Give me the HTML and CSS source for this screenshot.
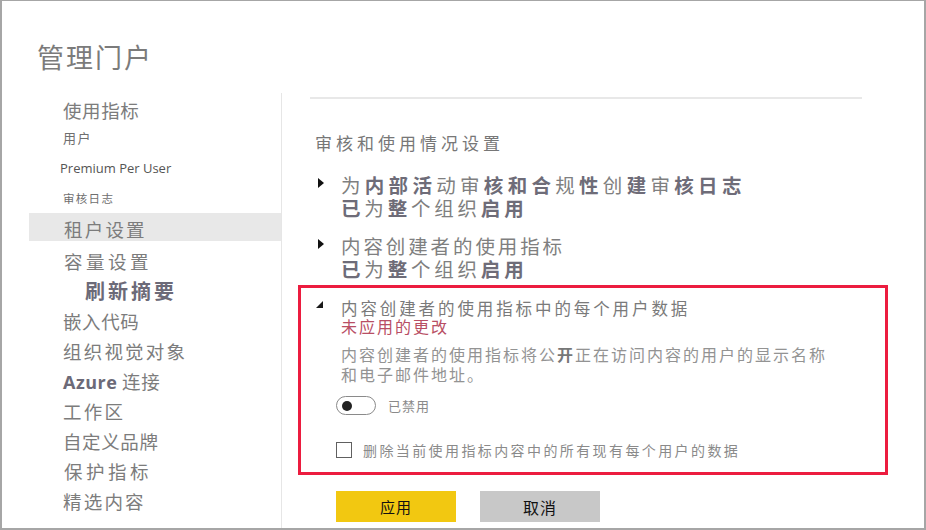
FILE: index.html
```html
<!DOCTYPE html>
<html lang="zh-CN">
<head>
<meta charset="utf-8">
<title>管理门户</title>
<link rel="stylesheet" href="styles.css">
</head>
<body>
<div class="frame">
  <header class="header"><h1 class="title">管理门户</h1></header>
  <div class="main">
    <nav class="nav">
      <div class="nav-item big first">使用指标</div>
      <div class="nav-item small users">用户</div>
      <div class="nav-item latin">Premium Per User</div>
      <div class="nav-item tiny">审核日志</div>
      <div class="nav-item big active">租户设置</div>
      <div class="nav-item big wide gapTop">容量设置</div>
      <div class="nav-item big bold sub">刷新摘要</div>
      <div class="nav-item big">嵌入代码</div>
      <div class="nav-item big mid">组织视觉对象</div>
      <div class="nav-item big"><b class="azure">Azure</b> 连接</div>
      <div class="nav-item big mid">工作区</div>
      <div class="nav-item big">自定义品牌</div>
      <div class="nav-item big wide">保护指标</div>
      <div class="nav-item big mid">精选内容</div>
    </nav>
    <section class="content">
      <div class="rule"></div>
      <h2 class="section-title">审核和使用情况设置</h2>

      <div class="setting">
        <svg class="caret" width="8" height="12" viewBox="0 0 8 12"><path d="M1 1 L7 6 L1 11 Z" fill="#111"/></svg>
        <div class="setting-text">
          <div class="setting-name">为<b>内部活</b>动审<b>核和合</b>规<b>性</b>创<b>建</b>审<b>核日志</b></div>
          <div class="setting-state"><b>已</b>为<b>整</b>个组织<b>启用</b></div>
        </div>
      </div>

      <div class="setting second">
        <svg class="caret" width="8" height="12" viewBox="0 0 8 12"><path d="M1 1 L7 6 L1 11 Z" fill="#111"/></svg>
        <div class="setting-text">
          <div class="setting-name light">内容创建者的使用指标</div>
          <div class="setting-state"><b>已</b>为<b>整</b>个组织<b>启用</b></div>
        </div>
      </div>

      <div class="highlight">
        <div class="open-setting">
          <svg class="caret-open" width="8" height="8" viewBox="0 0 8 8"><path d="M7 0 L7 7 L0 7 Z" fill="#1a1a1a"/></svg>
          <div class="open-body">
            <div class="open-name">内容创建者的使用指标中的每个用户数据</div>
            <div class="pending">未应用的更改</div>
            <p class="desc">内容创建者的使用指标将公<b>开</b>正在访问内容的用户的显示名称<br>和电子邮件地址。</p>
          </div>
        </div>
        <div class="toggle-row">
          <span class="toggle"><span class="knob"></span></span>
          <span class="toggle-label">已禁用</span>
        </div>
        <div class="check-row">
          <span class="checkbox"></span>
          <span class="check-label">删除当前使用指标内容中的所有现有每个用户的数据</span>
        </div>
      </div>

      <div class="actions">
        <button class="btn primary">应用</button>
        <button class="btn secondary">取消</button>
      </div>
    </section>
  </div>
</div>
</body>
</html>
```
FILE: styles.css
```css
* { box-sizing: border-box; }
html, body { margin: 0; padding: 0; background: #fff; }
body {
  font-family: "Noto Sans CJK SC", "Noto Sans", sans-serif;
  color: #7a7a7a;
}
.frame {
  width: 926px;
  height: 530px;
  border: 2px solid #a6a6a6;
  border-top-width: 1px;
  border-bottom-width: 2px;
  overflow: hidden;
  display: flex;
  flex-direction: column;
}
.header { height: 92px; padding: 41px 0 0 35px; }
.title {
  margin: 0;
  font-size: 27px;
  line-height: 30px;
  font-weight: 400;
  letter-spacing: 2px;
  color: #7b7b7b;
}
.main { flex: 1; display: flex; }
.nav {
  width: 280px;
  border-right: 1px solid #e6e6e6;
  padding-top: 3px;
}
.nav-item {
  padding-left: 61px;
  height: 30px;
  line-height: 30px;
  font-size: 18.5px;
  color: #7c7c7c;
  white-space: nowrap;
  letter-spacing: 0.6px;
}
.nav-item.first { height: 28px; line-height: 28px; }
.nav-item.small { font-size: 13px; height: 28px; line-height: 28px; color: #6f6f6f; letter-spacing: 1.5px; }
.nav-item.latin {
  font-family: "Open Sans", "Noto Sans", sans-serif;
  font-size: 13px; height: 32px; line-height: 32px; padding-left: 58px; color: #555;
  letter-spacing: 0;
}
.nav-item.tiny { font-size: 11.5px; height: 28px; line-height: 28px; color: #6f6f6f; letter-spacing: 1.3px; }
.nav-item.active {
  margin-top: 1px;
  margin-left: 27px;
  padding-left: 35px;
  padding-top: 4px;
  height: 28px;
  line-height: 24px;
  background: #e8e8e8;
  letter-spacing: 2.2px;
}
.nav-item.mid { letter-spacing: 2.2px; }
.nav-item.wide { letter-spacing: 3.5px; padding-left: 62px; }
.nav-item.gapTop { margin-top: 5px; }
.nav-item.sub { padding-left: 83px; font-size: 20px; font-weight: 700; color: #6c6a78; letter-spacing: 3px; }
.azure { font-family: "Open Sans", sans-serif; font-weight: 700; color: #6c6a78; font-size: 18px; letter-spacing: 0.5px; }

.content { flex: 1; padding-left: 28px; }
.rule { margin-top: 4px; width: 552px; height: 2px; background: #e8e8e8; }
.section-title {
  margin: 33px 0 0 5px;
  font-size: 17px;
  line-height: 22px;
  font-weight: 400;
  color: #777;
  letter-spacing: 4px;
}
.setting { display: flex; margin-top: 19px; }
.setting.second { margin-top: 15px; }
.caret { margin: 4px 0 0 7px; flex: none; }
.setting-text { margin-left: 16px; }
.setting-name, .setting-state {
  font-size: 19.5px;
  line-height: 23px;
  letter-spacing: 4.3px;
  color: #7f7f80;
  white-space: nowrap;
}
.setting-name.light { letter-spacing: 2.9px; }
.setting-state { letter-spacing: 3.8px; }
.setting-name b, .setting-state b { font-weight: 700; color: #6e6c78; }

.highlight {
  margin: 5px 0 0 -12px;
  width: 590px;
  height: 190px;
  border: 3px solid #ec1c3f;
  padding: 10px 0 0 15px;
}
.open-setting { display: flex; }
.caret-open { margin-top: 3px; flex: none; }
.open-body { margin-left: 17px; }
.open-name { font-size: 16.5px; line-height: 20px; color: #7a7a7a; letter-spacing: 2.9px; white-space: nowrap; }
.pending { font-size: 16px; line-height: 17px; color: #b84e64; letter-spacing: 2px; }
.desc {
  margin: 10px 0 0 0;
  font-size: 16px;
  line-height: 19.5px;
  color: #939393;
  letter-spacing: 2px;
  white-space: nowrap;
}
.desc b { color: #777; }
.toggle-row { display: flex; align-items: center; margin: 12px 0 0 20px; }
.toggle {
  width: 40px; height: 19px;
  border: 1.5px solid #8a8a8a;
  border-radius: 10px;
  display: flex; align-items: center;
  padding-left: 5px;
}
.knob { width: 10px; height: 10px; border-radius: 50%; background: #222; }
.toggle-label { margin-left: 12px; font-size: 13px; color: #8a8a8a; letter-spacing: 1px; }
.check-row { display: flex; align-items: center; margin: 25px 0 0 20px; }
.checkbox { width: 16px; height: 16px; border: 1.5px solid #606060; }
.check-label { margin-left: 11px; font-size: 14px; color: #8a8a8a; letter-spacing: 2.4px; white-space: nowrap; }

.actions { display: flex; gap: 24px; margin: 16px 0 0 26px; }
.btn {
  width: 120px; height: 31px;
  border: none; padding: 0;
  font-family: "Noto Sans CJK SC", sans-serif;
  font-size: 15px;
  color: #111;
  letter-spacing: 1px;
}
.primary { background: #f2c811; }
.secondary { background: #c8c8c8; font-size: 16px; }
```
